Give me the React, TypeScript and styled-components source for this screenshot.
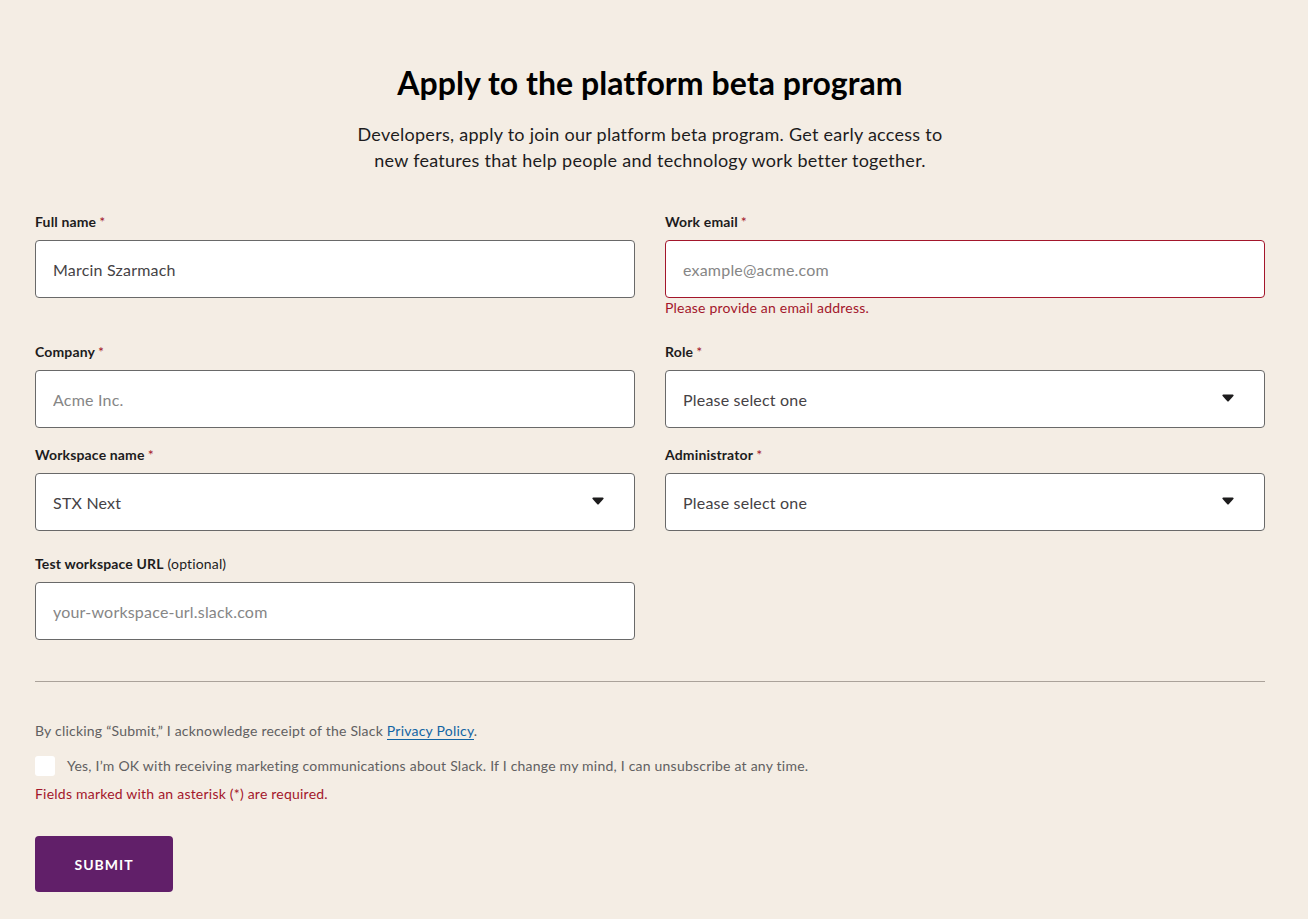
import styled, { createGlobalStyle } from 'styled-components';

const GlobalStyle = createGlobalStyle`
  html, body {
    margin: 0;
    padding: 0;
    background: #f4ede4;
  }
  body {
    font-family: Lato, "Noto Sans", "Liberation Sans", sans-serif;
    color: #1d1c1d;
  }
  * {
    box-sizing: border-box;
  }
`;

const Page = styled.div`
  padding: 63px 43px 26px 35px;
  min-height: 919px;
`;

const Header = styled.header`
  display: flex;
  flex-direction: column;
  align-items: center;
  text-align: center;
`;

const Title = styled.h1`
  margin: 0;
  font-size: 32px;
  line-height: 40px;
  font-weight: 700;
  letter-spacing: 0.05px;
  color: #000;
`;

const Intro = styled.p`
  margin: 18px 0 0;
  width: 620px;
  font-size: 18px;
  line-height: 26px;
  letter-spacing: 0.27px;
  color: #1d1c1d;
`;

const Form = styled.form`
  margin-top: 40px;
  width: 1230px;
`;

const Grid = styled.div`
  display: grid;
  grid-template-columns: 600px 600px;
  column-gap: 30px;
  align-items: start;
`;

const Field = styled.div<{ $extra?: number }>`
  display: flex;
  flex-direction: column;
  margin-top: ${(p) => p.$extra ?? 0}px;
  margin-bottom: 18px;
`;

const Label = styled.label`
  font-size: 14px;
  line-height: 18px;
  font-weight: 700;
  letter-spacing: 0.15px;
  color: #1d1c1d;
  margin-bottom: 9px;
`;

const Star = styled.span`
  color: #a3162b;
  font-weight: 400;
  margin-left: 3px;
`;

const Optional = styled.span`
  font-weight: 400;
  margin-left: 4px;
`;

const Input = styled.input<{ $error?: boolean }>`
  height: 58px;
  width: 100%;
  padding: 0 17px;
  border: 1px solid ${(p) => (p.$error ? '#a3162b' : '#696969')};
  border-radius: 4px;
  background: #fff;
  font-family: inherit;
  font-size: 16px;
  letter-spacing: 0.2px;
  color: #454245;
  outline: none;

  &::placeholder {
    color: #868686;
  }
`;

const SelectBox = styled.div`
  position: relative;
  height: 58px;
  display: flex;
  align-items: center;
  padding: 0 17px;
  border: 1px solid #696969;
  border-radius: 4px;
  background: #fff;
  font-size: 16px;
  letter-spacing: 0.2px;
  color: #454245;
`;

const Caret = styled.svg`
  position: absolute;
  right: 30px;
  top: 50%;
  margin-top: -5px;
  width: 12px;
  height: 8px;
`;

const ErrorText = styled.div`
  font-size: 14px;
  line-height: 20px;
  letter-spacing: 0.2px;
  color: #a3162b;
  margin-bottom: 7px;
`;

const Divider = styled.hr`
  border: none;
  border-top: 1px solid #aaa29a;
  margin: 23px 0 39px;
`;

const Notice = styled.p`
  margin: 0;
  font-size: 14px;
  line-height: 20px;
  letter-spacing: 0.22px;
  color: #616061;
`;

const Link = styled.a`
  color: #1264a3;
  text-decoration: none;
  border-bottom: 1px solid #1264a3;
`;

const CheckRow = styled.label`
  display: flex;
  align-items: center;
  gap: 12px;
  margin-top: 15px;
  font-size: 14px;
  line-height: 20px;
  letter-spacing: 0.22px;
  color: #616061;
`;

const CheckBox = styled.span`
  width: 20px;
  height: 20px;
  border-radius: 3px;
  background: #fff;
  flex-shrink: 0;
`;

const Required = styled.p`
  margin: 8px 0 0;
  font-size: 14px;
  line-height: 20px;
  letter-spacing: 0.22px;
  color: #a3162b;
`;

const SubmitButton = styled.button`
  margin-top: 32px;
  width: 138px;
  height: 56px;
  border: none;
  border-radius: 4px;
  background: #611f69;
  color: #fff;
  font-family: inherit;
  font-size: 14px;
  font-weight: 700;
  letter-spacing: 1px;
  text-transform: uppercase;
`;

const Select = ({ value }: { value: string }) => (
  <SelectBox>
    {value}
    <Caret viewBox="0 0 12 8">
      <path d="M1.3 0.5h9.4c.8 0 1.2.9.7 1.5L6.7 7.3c-.4.4-1 .4-1.4 0L.6 2C.1 1.4.5.5 1.3.5z" fill="#1d1c1d" />
    </Caret>
  </SelectBox>
);

const App = () => (
  <Page>
    <GlobalStyle />
    <Header>
      <Title>Apply to the platform beta program</Title>
      <Intro>
        Developers, apply to join our platform beta program. Get early access to new features that
        help people and technology work better together.
      </Intro>
    </Header>
    <Form onSubmit={(e) => e.preventDefault()}>
      <Grid>
        <Field>
          <Label>
            Full name<Star>*</Star>
          </Label>
          <Input defaultValue="Marcin Szarmach" />
        </Field>
        <Field>
          <Label>
            Work email<Star>*</Star>
          </Label>
          <Input $error placeholder="example@acme.com" />
          <ErrorText>Please provide an email address.</ErrorText>
        </Field>
        <Field>
          <Label>
            Company<Star>*</Star>
          </Label>
          <Input placeholder="Acme Inc." />
        </Field>
        <Field>
          <Label>
            Role<Star>*</Star>
          </Label>
          <Select value="Please select one" />
        </Field>
        <Field>
          <Label>
            Workspace name<Star>*</Star>
          </Label>
          <Select value="STX Next" />
        </Field>
        <Field>
          <Label>
            Administrator<Star>*</Star>
          </Label>
          <Select value="Please select one" />
        </Field>
        <Field $extra={6}>
          <Label>
            Test workspace URL<Optional>(optional)</Optional>
          </Label>
          <Input placeholder="your-workspace-url.slack.com" />
        </Field>
      </Grid>
      <Divider />
      <Notice>
        By clicking “Submit,” I acknowledge receipt of the Slack <Link href="#">Privacy Policy</Link>.
      </Notice>
      <CheckRow>
        <CheckBox />
        Yes, I’m OK with receiving marketing communications about Slack. If I change my mind, I can
        unsubscribe at any time.
      </CheckRow>
      <Required>Fields marked with an asterisk (*) are required.</Required>
      <SubmitButton type="submit">Submit</SubmitButton>
    </Form>
  </Page>
);

export default App;
